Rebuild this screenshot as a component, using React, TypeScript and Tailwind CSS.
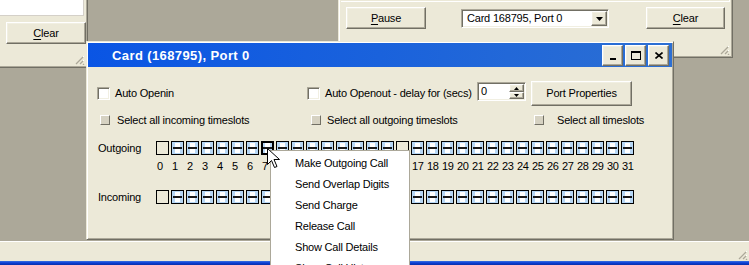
import React from 'react';

const raised =
  'border border-t-white border-l-white border-r-[#716f64] border-b-[#716f64] shadow-[inset_-1px_-1px_0_#aca899,inset_1px_1px_0_#f1efe2] bg-[#ece9d8]';
const sunken =
  'border border-t-[#aca899] border-l-[#aca899] border-r-white border-b-white shadow-[inset_1px_1px_0_#716f64,inset_-1px_-1px_0_#f1efe2]';
const frame =
  'border border-t-[#ece9d8] border-l-[#ece9d8] border-r-[#716f64] border-b-[#716f64] shadow-[inset_1px_1px_0_#ffffff,inset_-1px_-1px_0_#aca899] bg-[#ece9d8]';

const Grip = () => (
  <svg width="12" height="12" viewBox="0 0 12 12">
    {[0, 4, 8].map((o) => (
      <g key={o}>
        <line x1={11 - o} y1="11" x2="11" y2={11 - o} stroke="#fff" strokeWidth="1" />
        <line x1={12 - o} y1="11" x2="11" y2={12 - o} stroke="#aca899" strokeWidth="1.2" transform="translate(-1,0)" />
      </g>
    ))}
  </svg>
);

const Button = ({ label, u, className }: { label: string; u: string; className: string }) => (
  <div className={`${raised} flex items-center justify-center text-black ${className}`}>
    <span>
      <span className="underline underline-offset-[2px]">{u}</span>
      {label.slice(u.length)}
    </span>
  </div>
);

const Slot = ({ kind }: { kind: 'empty' | 'full' | 'hover' }) => {
  if (kind === 'empty')
    return (
      <svg width="13" height="14" viewBox="0 0 13 14" className="shrink-0">
        <rect x="0.5" y="0.5" width="12" height="13" fill="none" stroke="#000" />
      </svg>
    );
  return (
    <svg width="13" height="14" viewBox="0 0 13 14" className="shrink-0">
      <rect x="0" y="0" width="13" height="14" fill="#000" />
      <rect x={kind === 'hover' ? 2 : 1} y={kind === 'hover' ? 2 : 1} width={kind === 'hover' ? 9 : 11} height={kind === 'hover' ? 10 : 12} fill="#b7d7f5" />
      <rect x="4" y="2" width="5" height="4" fill="#fff" />
      <rect x="4" y="8" width="5" height="4" fill="#fff" />
      <rect x="2" y="6" width="9" height="2" fill="#1a1a1a" />
    </svg>
  );
};

const SlotRow = ({ label, empty, hover }: { label: string; empty: number[]; hover?: number }) => (
  <div className="flex items-center h-[14px]">
    <div className="w-[68px] pl-[10px]">{label}</div>
    <div className="flex gap-[2px]">
      {Array.from({ length: 32 }).map((_, i) => (
        <Slot key={i} kind={empty.includes(i) ? 'empty' : i === hover ? 'hover' : 'full'} />
      ))}
    </div>
  </div>
);

const Check = () => <div className={`${sunken} w-[13px] h-[13px] bg-white shrink-0`} />;
const Square = () => (
  <div className="w-[10px] h-[10px] shrink-0 border border-t-white border-l-white border-r-[#716f64] border-b-[#716f64] bg-[#d6d2c2]" />
);

export default function App() {
  return (
    <div className="relative w-[749px] h-[265px] overflow-hidden bg-[#aca899] flex flex-col font-['Liberation_Sans',Arial,sans-serif] text-[11px] leading-[13px] tracking-[-0.2px] text-black">
      <div className="relative h-[241px]">
        {/* left window */}
        <div className={`absolute left-[-4px] top-[-20px] w-[92px] h-[88px] ${frame} p-[1px] flex flex-col`}>
          <div className={`h-[34px] w-[86px] bg-white border-r border-b border-[#d4d0c8]`} />
          <Button label="Clear" u="C" className="mt-[6px] ml-[8px] w-[80px] h-[22px]" />
          <div className="absolute right-[2px] bottom-[2px]">
            <Grip />
          </div>
        </div>

        {/* top right window */}
        <div className={`absolute left-[338px] top-[-20px] w-[395px] h-[78px] ${frame} p-[1px] flex flex-col`}>
          <div className="h-[20px] mx-[1px] border-b border-white border-r" />
          <div className="flex items-start mt-[5px] pl-[6px]">
            <Button label="Pause" u="P" className="w-[80px] h-[22px]" />
            <div className={`${sunken} ml-[35px] mt-[2px] w-[148px] h-[19px] bg-white flex items-center`}>
              <span className="flex-1 pl-[5px]">Card 168795, Port 0</span>
              <div className={`${raised} w-[16px] h-[15px] mr-[1px] flex items-center justify-center`}>
                <svg width="7" height="4" viewBox="0 0 7 4"><path d="M0 0h7L3.5 4z" fill="#000" /></svg>
              </div>
            </div>
            <Button label="Clear" u="C" className="ml-[37px] w-[79px] h-[22px]" />
          </div>
          <div className="absolute right-[2px] bottom-[2px]">
            <Grip />
          </div>
        </div>

        {/* card window */}
        <div className={`absolute left-[86px] top-[41px] w-[588px] h-[199px] ${frame} p-[1px] flex flex-col`}>
          <div className="h-[24px] flex items-center bg-gradient-to-r from-[#0a55e4] via-[#1a62dc] to-[#2c6fd3]">
            <span className="pl-[24px] text-white font-bold text-[13px] tracking-[0.4px]">Card (168795), Port 0</span>
            <div className="ml-auto flex gap-[2px] pr-[3px]">
              <div className={`${raised} w-[21px] h-[21px] flex items-end justify-center pb-[5px]`}>
                <div className="w-[6px] h-[2px] bg-black ml-[1px]" />
              </div>
              <div className={`${raised} w-[21px] h-[21px] flex items-center justify-center`}>
                <div className="w-[10px] h-[9px] border border-black border-t-2" />
              </div>
              <div className={`${raised} w-[21px] h-[21px] flex items-center justify-center`}>
                <svg width="8" height="7" viewBox="0 0 8 7">
                  <path d="M0.5 0.5L7.5 6.5M7.5 0.5L0.5 6.5" stroke="#000" strokeWidth="1.6" />
                </svg>
              </div>
            </div>
          </div>

          <div className="flex-1 flex flex-col">
            <div className="mt-[14px] h-[25px] flex items-center">
              <div className="w-[219px] pl-[9px] flex items-center gap-[5px]">
                <Check />
                <span>Auto Openin</span>
              </div>
              <div className="w-[170px] flex items-center gap-[5px]">
                <Check />
                <span>Auto Openout - delay for (secs)</span>
              </div>
              <div className={`${sunken} self-start mt-[1px] w-[49px] h-[19px] bg-white flex items-center`}>
                <span className="flex-1 pl-[3px]">0</span>
                <div className="flex flex-col w-[15px] h-[15px] mr-[1px]">
                  <div className={`${raised} h-[8px] flex items-center justify-center`}>
                    <svg width="5" height="3" viewBox="0 0 5 3"><path d="M0 3h5L2.5 0z" fill="#000" /></svg>
                  </div>
                  <div className={`${raised} h-[7px] flex items-center justify-center`}>
                    <svg width="5" height="3" viewBox="0 0 5 3"><path d="M0 0h5L2.5 3z" fill="#000" /></svg>
                  </div>
                </div>
              </div>
              <div className={`${raised} ml-[5px] w-[101px] h-[25px] flex items-center justify-center`}>Port Properties</div>
            </div>

            <div className="mt-[9px] h-[10px] flex items-center">
              <div className="w-[223px] pl-[12px] flex items-center gap-[7px]">
                <Square />
                <span>Select all incoming timeslots</span>
              </div>
              <div className="w-[223px] flex items-center gap-[6px]">
                <Square />
                <span>Select all outgoing timeslots</span>
              </div>
              <div className="flex items-center gap-[13px]">
                <Square />
                <span>Select all timeslots</span>
              </div>
            </div>

            <div className="mt-[16px]">
              <SlotRow label="Outgoing" empty={[0, 16]} hover={7} />
            </div>
            <div className="mt-[5px] h-[13px] flex pl-[68px]">
              {Array.from({ length: 32 }).map((_, i) => (
                <span key={i} className={`w-[15px] shrink-0 pl-[1px] tracking-[-0.4px] ${i >= 8 && i <= 16 ? 'invisible' : ''}`}>
                  {i}
                </span>
              ))}
            </div>
            <div className="mt-[17px]">
              <SlotRow label="Incoming" empty={[0]} />
            </div>
          </div>
        </div>
      </div>

      {/* status bar + taskbar */}
      <div className="relative h-[20px] bg-[#ece9d8] border-t border-white">
        <div className="absolute right-[1px] bottom-[1px]">
          <Grip />
        </div>
      </div>
      <div className="h-[4px] bg-gradient-to-b from-[#3a6fe0] via-[#0a3bd6] to-[#0831a8]" />

      {/* context menu */}
      <div className="absolute left-[270px] top-[150px] w-[140px] h-[140px] bg-white border border-[#aca899] pt-[2px]">
        {['Make Outgoing Call', 'Send Overlap Digits', 'Send Charge', 'Release Call', 'Show Call Details', 'Show Call History'].map((t) => (
          <div key={t} className="h-[21px] flex items-center pl-[24px]">
            {t}
          </div>
        ))}
      </div>

      {/* mouse cursor */}
      <svg className="absolute left-[267px] top-[148px]" width="13" height="21" viewBox="0 0 13 21">
        <path d="M0.5 0.5V16.5L4.5 12.5L7.5 19.5L10 18.5L7 11.5H12.5Z" fill="#fff" stroke="#000" strokeWidth="1" strokeLinejoin="miter" />
      </svg>
    </div>
  );
}
